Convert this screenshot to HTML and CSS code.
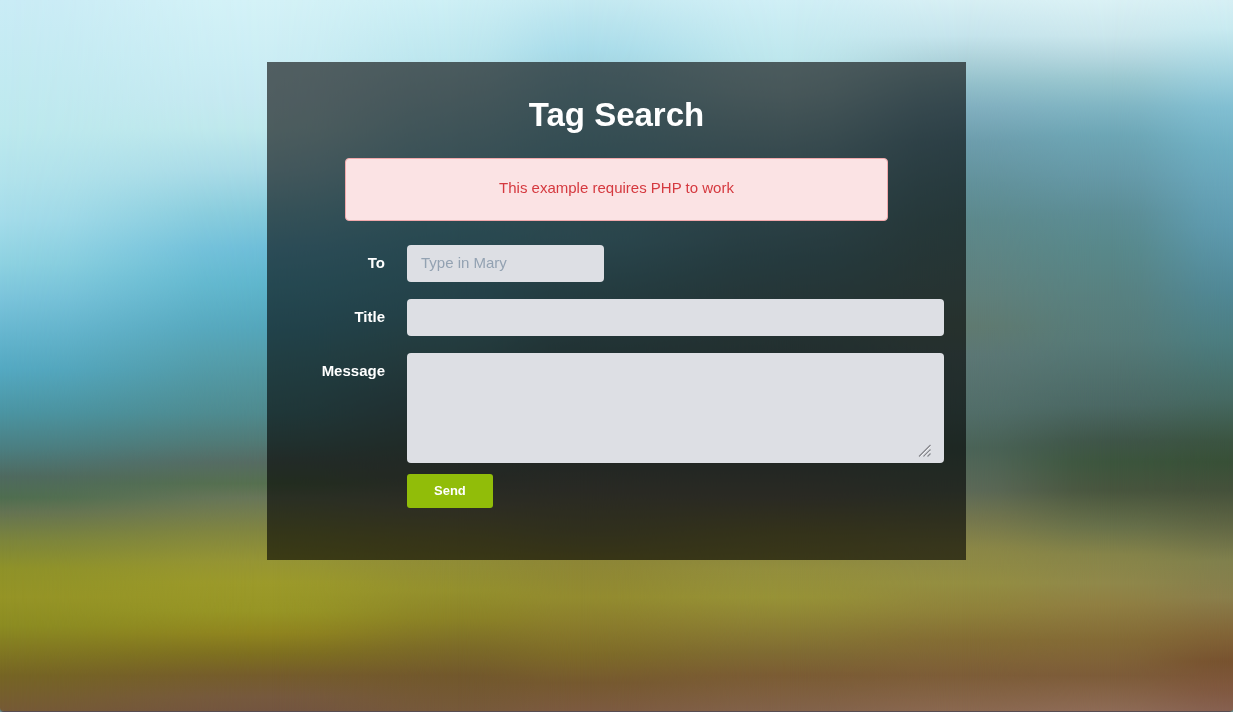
FILE: index.html
```html
<!DOCTYPE html>
<html lang="en">
<head>
<meta charset="utf-8">
<meta name="viewport" content="width=device-width, initial-scale=1">
<title>Tag Search</title>
<link rel="stylesheet" href="styles.css">
</head>
<body>
<div class="backdrop" aria-hidden="true">
  <div class="band band-1"></div>
  <div class="band band-2"></div>
  <div class="band band-3"></div>
  <div class="band band-4"></div>
  <div class="band band-5"></div>
  <div class="band band-6"></div>
  <div class="band band-7"></div>
  <div class="band band-8"></div>
</div>
<main class="panel">
  <h1 class="title">Tag Search</h1>
  <p class="alert" role="alert">This example requires PHP to work</p>
  <form class="form">
    <label class="label" for="to">To</label>
    <input class="field field-short" id="to" type="text" placeholder="Type in Mary">
    <label class="label" for="title">Title</label>
    <input class="field" id="title" type="text">
    <label class="label" for="message">Message</label>
    <div class="area">
      <textarea class="area-input" id="message"></textarea>
      <svg class="grip" viewBox="0 0 13 13" aria-hidden="true"><path d="M1 12.500 12.500 1M5.500 12.500l7-7M9.500 12.500l3-3" fill="none" stroke="#85868b" stroke-width="1.200"/><path d="M2.500 12.500l10-10M7 12.500 12.500 7" fill="none" stroke="#f2f2f4"/></svg>
    </div>
    <button class="send" type="button">Send</button>
  </form>
</main>
</body>
</html>
```
FILE: styles.css
```css
* { box-sizing: border-box; }

body {
  margin: 0;
  min-height: 100vh;
  padding: 62px 16px;
  background: #6d8f8a;
  color: #fff;
  font: 15px/24px "Liberation Sans", Arial, sans-serif;
}

/* Blurred landscape: vertical gradients cross-faded from left to right */
.backdrop {
  position: fixed;
  inset: 0;
  z-index: -1;
  overflow: hidden;
  border-radius: 0 0 4px 4px;
  border-bottom: 1px solid #584c50;
}
.band {
  --span: calc(var(--to) - var(--from));
  position: absolute;
  inset: 0;
  mask-image: linear-gradient(90deg,
    transparent var(--from),
    rgba(0, 0, 0, .16) calc(var(--from) + var(--span) * .25),
    rgba(0, 0, 0, .5) calc(var(--from) + var(--span) * .5),
    rgba(0, 0, 0, .84) calc(var(--from) + var(--span) * .75),
    #000 var(--to));
}

.band-1 {
  background: linear-gradient(#caecf6 0%, #bde9ee 18%, #b2e3ec 25%, #a4dcea 31%, #8ed2e1 37%, #7bc4db 42%, #66b6cf 47%, #54a9c2 52%, #4b95a3 58%, #4b7f82 63%, #4f6a60 67%, #4f6e50 70%, #647353 72%, #7c853c 76%, #8f9229 80%, #959426 84%, #8c8c22 88%, #837b22 91%, #766524 95%, #765a36 100%);
  mask-image: none;
}
.band-2 {
  --from: 0%;
  --to: 22%;
  background: linear-gradient(#d4f2f7 0%, #cbedf4 9%, #c6e9f1 14%, #bfe8ec 18%, #a8dae6 24%, #85cadb 30%, #6dbdd8 35%, #5eb5cc 40%, #54a6bb 46%, #549daa 50%, #4f8a8e 58%, #517a76 62%, #566b62 65%, #56704f 68%, #697659 70%, #83873f 75%, #969534 79%, #9c9a2a 82%, #979525 86%, #90851f 89%, #7e6f20 92%, #755c2c 95%, #76593e 98%, #735540 100%);
}
.band-3 {
  --from: 22%;
  --to: 37%;
  background: linear-gradient(#cdeff5 0%, #bce6ee 8%, #afdae3 13%, #93cbd8 21%, #6ebdd0 30%, #60b0c4 36%, #5aa3b4 43%, #589399 49%, #52757a 57%, #52695f 63%, #5a6459 67%, #71715a 71%, #86823e 76%, #908c36 79%, #94902d 83%, #8b8226 87%, #7c6b28 91%, #72582c 95%, #76593a 100%);
}
.band-4 {
  --from: 37%;
  --to: 47%;
  background: linear-gradient(#c4e9f1 0%, #a9dcea 7%, #a0d3e0 10%, #8ec8d6 16%, #78b9c9 24%, #69afc0 34%, #5c9aa6 40%, #547f83 49%, #506e6c 57%, #505f59 64%, #67685a 69%, #7a7848 75%, #8d8636 79%, #938b2f 84%, #8a7c2c 88%, #7e6b28 92%, #76592f 96%, #7c5a40 100%);
}
.band-5 {
  --from: 47%;
  --to: 64%;
  background: linear-gradient(#d0eff6 0%, #bfe7ed 8%, #b2d9df 13%, #8bbac5 21%, #70a5b2 29%, #5e929c 36%, #5a7f80 45%, #526c6a 55%, #505f58 64%, #6a6958 70%, #827e42 75%, #938e3d 80%, #979237 84%, #8c7f34 88%, #7f6a33 92%, #7b5c34 95%, #82624a 100%);
}
.band-6 {
  --from: 64%;
  --to: 78%;
  background: linear-gradient(#d7eff4 0%, #c5e4ec 5%, #b0d4dc 8%, #92bfca 12%, #82b0c0 15%, #6d9dac 20%, #62919a 26%, #5d898c 31%, #607f7a 42%, #607a70 46%, #5c7775 50%, #526e69 58%, #4b6458 63%, #5d6a58 69%, #75774e 73%, #8b8747 77%, #948e41 82%, #8f813a 86%, #846d34 90%, #7d5d38 95%, #8a6850 100%);
}
.band-7 {
  --from: 78%;
  --to: 90%;
  background: linear-gradient(#daf1f5 0%, #cae6ec 5%, #b5d7df 8%, #9bc8d0 11%, #80b5c3 15%, #6da6b5 19%, #6598a6 25%, #5c8d95 30%, #58888a 35%, #58807f 42%, #567a78 48%, #4b6864 57%, #3f5548 62%, #3c553d 65%, #48553e 69%, #67704a 74%, #868449 78%, #90884a 82%, #907f42 85%, #846b36 90%, #7d5c39 95%, #8e6b56 100%);
}
.band-8 {
  --from: 90%;
  --to: 100%;
  background: linear-gradient(#d6eff4 0%, #c8eaf0 4%, #a9d7e2 9%, #82bfd2 15%, #6fb0c4 21%, #68a6bb 26%, #5e9bb0 32%, #508896 41%, #4b7d80 48%, #466a63 56%, #3b5441 62%, #385037 65%, #45513b 69%, #606644 74%, #80804d 79%, #8a7e4b 84%, #826537 89%, #77522f 93%, #80583f 97%, #866050 100%);
}

.panel {
  max-width: 699px;
  margin: 0 auto;
  padding: 29px 22px 52px;
  background: rgba(0, 0, 0, .6);
}

.title {
  margin: 0 0 19px;
  font-size: 33px;
  line-height: 48px;
  text-align: center;
}

.alert {
  margin: 0 56px 24px;
  padding: 17px 20px 20px;
  border: 1px solid #f2a9ac;
  border-radius: 4px;
  background: #fbe3e4;
  color: #d5393f;
  line-height: 24px;
  text-align: center;
}

.form {
  display: grid;
  grid-template-columns: 96px 1fr;
  column-gap: 22px;
  row-gap: 17px;
  align-items: start;
}

.label {
  padding-top: 6px;
  font-weight: 700;
  text-align: right;
}

.field,
.area {
  width: 100%;
  border: 0;
  border-radius: 4px;
  background: #dddfe4;
  color: #34495e;
}
.field {
  height: 37px;
  padding: 0 14px 3px;
  font: inherit;
}
.field-short { width: 197px; }
.field::placeholder { color: #93a2b2; opacity: 1; }

.area { position: relative; height: 110px; }
.area-input {
  display: block;
  width: 100%;
  height: 100%;
  padding: 5px 14px;
  border: 0;
  background: transparent;
  color: inherit;
  font: inherit;
  resize: none;
}
.grip {
  position: absolute;
  right: 13px;
  bottom: 6px;
  width: 13px;
  height: 13px;
}

.send {
  grid-column: 2;
  justify-self: start;
  height: 34px;
  margin-top: -6px;
  padding: 0 27px;
  border: 0;
  border-radius: 3px;
  background: #91bd09;
  color: #fff;
  font: 700 13px/20px "Liberation Sans", Arial, sans-serif;
}
```
